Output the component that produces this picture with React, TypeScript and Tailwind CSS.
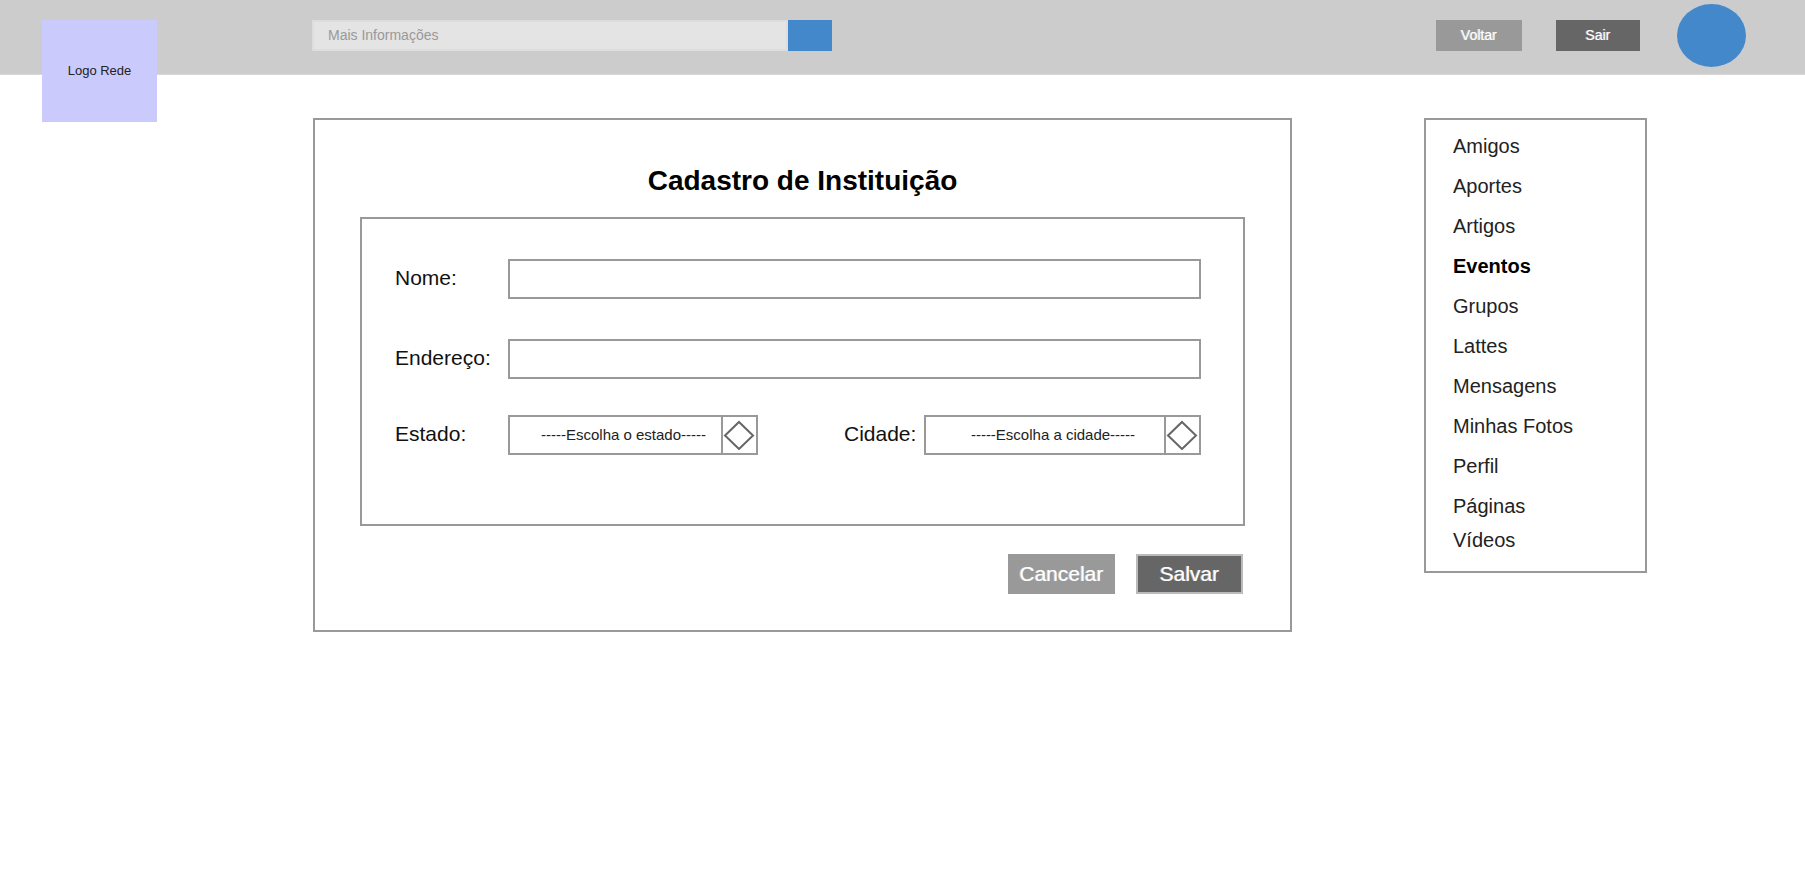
import type { ReactNode } from "react";

const menuItems = [
  "Amigos",
  "Aportes",
  "Artigos",
  "Eventos",
  "Grupos",
  "Lattes",
  "Mensagens",
  "Minhas Fotos",
  "Perfil",
  "Páginas",
  "Vídeos",
];

function Header() {
  return (
    <header className="flex h-[75px] items-start border-b border-[#d8d8d8] bg-[#cccccc] pr-[59px] pl-[42px]">
      <a
        href="#inicio"
        className="mt-5 flex h-[102px] w-[115px] shrink-0 items-center justify-center bg-[#cacafc] text-[13px] text-[#222222]"
      >
        Logo Rede
      </a>
      <div className="ml-[155px] flex h-[71px] flex-1 items-center">
        <form role="search" className="flex h-[31px] max-w-[520px] flex-1">
          <input
            type="search"
            aria-label="Mais Informações"
            placeholder="Mais Informações"
            className="min-w-0 flex-1 border-2 border-[#dddddd] bg-[#e4e4e4] px-3.5 pb-0.5 text-sm text-[#444444] outline-none placeholder:text-[#999999]"
          />
          <button type="button" aria-label="Buscar" className="w-11 bg-[#4488cc]" />
        </form>
        <nav className="ml-auto flex items-center text-sm text-white">
          <button
            type="button"
            className="h-[31px] w-[86px] bg-[#999999] pb-0.5 [text-shadow:-1px_0_0_#ffffff80]"
          >
            Voltar
          </button>
          <button
            type="button"
            className="ml-[34px] h-[31px] w-[84px] bg-[#666666] pb-0.5 [text-shadow:-1px_0_0_#ffffff80]"
          >
            Sair
          </button>
          <button
            type="button"
            aria-label="Perfil do usuário"
            className="ml-[37px] h-[63px] w-[69px] rounded-[50%] bg-[#4488cc]"
          />
        </nav>
      </div>
    </header>
  );
}

function TextRow({ id, label }: { id: string; label: string }) {
  return (
    <div className="flex items-center">
      <label htmlFor={id} className="w-[113px] shrink-0 pb-0.5">
        {label}
      </label>
      <input
        id={id}
        type="text"
        className="h-10 min-w-0 flex-1 border-2 border-[#999999] bg-white px-3 outline-none"
      />
    </div>
  );
}

function SelectBox({ id, className, children }: { id: string; className: string; children: ReactNode }) {
  return (
    <div className={`relative h-10 ${className}`}>
      <select
        id={id}
        className="h-full w-full appearance-none border-2 border-[#999999] bg-white pr-[19px] text-center text-[15px] text-[#222222] outline-none"
      >
        {children}
      </select>
      <span className="pointer-events-none absolute inset-y-0 right-0 flex w-[37px] items-center justify-center border-2 border-[#999999] bg-white">
        <svg width="33" height="30" viewBox="0 0 33 30" fill="none" stroke="#666666" strokeWidth="2" className="shrink-0">
          <path d="M16 2 L30 15.5 L16 29 L2 15.5 Z" />
        </svg>
      </span>
    </div>
  );
}

function InstitutionForm() {
  return (
    <main className="min-w-[800px] flex-1 border-2 border-[#999999] px-[45px] pt-[43px] pb-9">
      <h1 className="mb-[18px] text-center text-[28px] leading-9 font-bold text-black">
        Cadastro de Instituição
      </h1>
      <form>
        <div className="border-2 border-[#999999] pt-10 pr-[42px] pb-[69px] pl-[33px] text-[21px] text-[#111111]">
          <div className="flex flex-col gap-10">
            <TextRow id="nome" label="Nome:" />
            <TextRow id="endereco" label="Endereço:" />
          </div>
          <div className="mt-9 flex items-center">
            <label htmlFor="estado" className="w-[113px] shrink-0 pb-0.5">
              Estado:
            </label>
            <SelectBox id="estado" className="w-[250px]">
              <option>-----Escolha o estado-----</option>
            </SelectBox>
            <label htmlFor="cidade" className="ml-auto w-20 shrink-0 pb-0.5">
              Cidade:
            </label>
            <SelectBox id="cidade" className="w-[277px]">
              <option>-----Escolha a cidade-----</option>
            </SelectBox>
          </div>
        </div>
        <div className="mt-7 flex justify-end gap-[21px] pr-0.5 text-[21px] text-white">
          <button type="button" className="h-10 w-[107px] bg-[#999999] [text-shadow:-1px_0_0_#ffffff80]">
            Cancelar
          </button>
          <button
            type="button"
            className="h-10 w-[107px] border-2 border-[#bbbbbb] bg-[#666666] [text-shadow:-1px_0_0_#ffffff80]"
          >
            Salvar
          </button>
        </div>
      </form>
    </main>
  );
}

function SideMenu() {
  return (
    <aside className="w-[223px] shrink-0 border-2 border-[#999999] pt-1.5 pb-[17px] pl-[27px]">
      <nav>
        <ul className="text-xl text-[#222222]">
          {menuItems.map((item) => (
            <li key={item} className="flex h-10 items-center last:h-7">
              <a
                href="#menu"
                aria-current={item === "Eventos" ? "page" : undefined}
                className="aria-[current=page]:font-bold aria-[current=page]:text-black"
              >
                {item}
              </a>
            </li>
          ))}
        </ul>
      </nav>
    </aside>
  );
}

export default function App() {
  return (
    <div className="min-h-screen bg-white font-['Liberation_Sans',Arial,sans-serif]">
      <Header />
      <div className="flex items-start gap-[132px] pt-[43px] pr-[158px] pl-[313px]">
        <InstitutionForm />
        <SideMenu />
      </div>
    </div>
  );
}
